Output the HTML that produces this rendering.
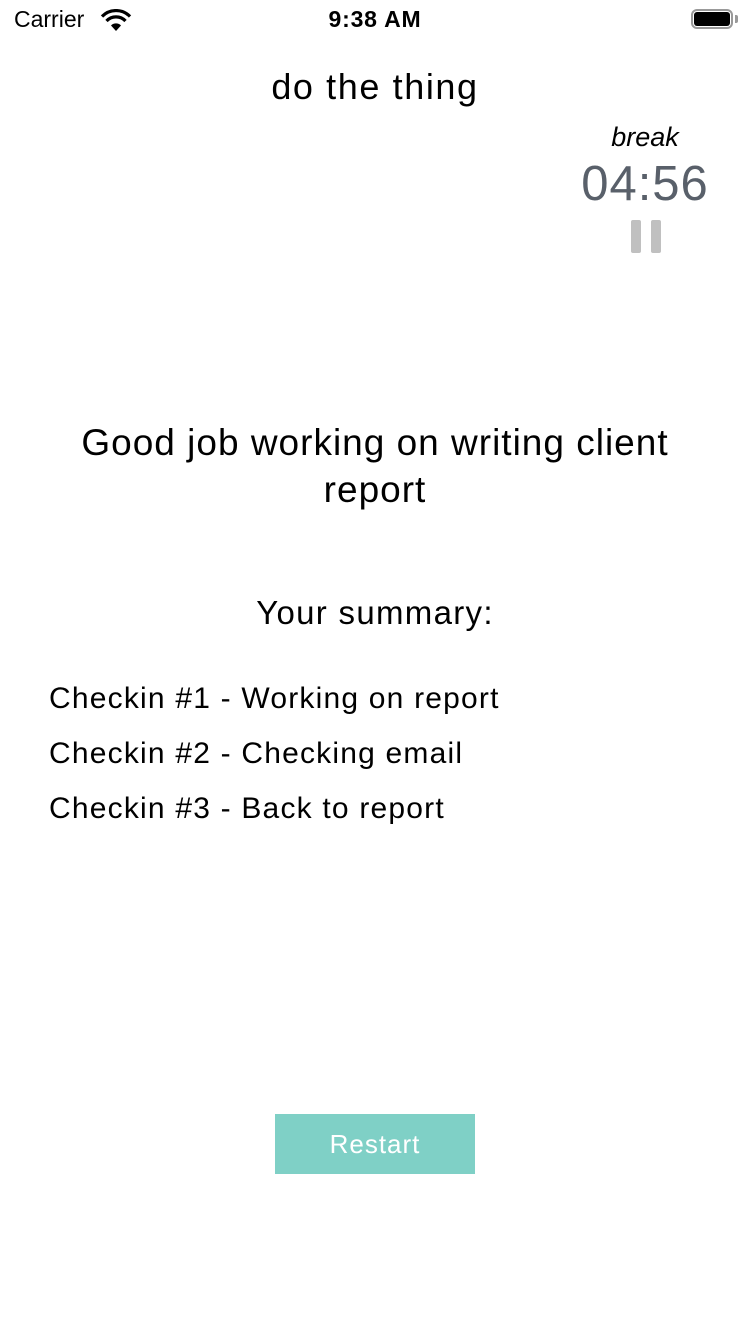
<!DOCTYPE html>
<html><head><meta charset="utf-8"><style>
body{margin:0;width:750px;height:1334px;background:#fff;font-family:"Liberation Sans",sans-serif;position:relative;overflow:hidden;color:#000}
.a{position:absolute;white-space:nowrap}
</style></head><body>
<div class="a" style="left:14px;top:6px;font-size:23px">Carrier</div>
<svg class="a" style="left:100px;top:9px" width="32" height="24" viewBox="0 0 32 24"><path d="M16 22 L11 16.5 A7 7 0 0 1 21 16.5Z" fill="#000"/><path d="M6.5 12 A13 13 0 0 1 25.5 12" stroke="#000" stroke-width="3.2" fill="none"/><path d="M2 7.5 A19.5 19.5 0 0 1 30 7.5" stroke="#000" stroke-width="3.2" fill="none"/></svg>
<div class="a" style="left:0;width:750px;text-align:center;top:6px;font-size:23px;font-weight:bold;letter-spacing:0.8px">9:38 AM</div>
<div class="a" style="left:691px;top:9px;width:42px;height:20px;border:2px solid #999;border-radius:6px;box-sizing:border-box"></div>
<div class="a" style="left:694px;top:12px;width:36px;height:14px;background:#000;border-radius:3px"></div>
<div class="a" style="left:735px;top:15px;width:3px;height:8px;background:#999;border-radius:0 2px 2px 0"></div>
<div class="a" style="left:0;width:750px;text-align:center;top:66px;font-size:36px;letter-spacing:1.6px">do the thing</div>
<div class="a" style="left:570px;width:150px;text-align:center;top:122px;font-size:27px;font-style:italic">break</div>
<div class="a" style="left:560px;width:170px;text-align:center;top:156px;font-size:49px;color:#59606a;letter-spacing:1px">04:56</div>
<div class="a" style="left:631px;top:220px;width:10px;height:33px;background:#c0c0c0;border-radius:2px"></div>
<div class="a" style="left:651px;top:220px;width:10px;height:33px;background:#c0c0c0;border-radius:2px"></div>
<div class="a" style="left:0;width:750px;text-align:center;top:419px;font-size:37px;line-height:47px;letter-spacing:1px;white-space:normal">Good job working on writing client<br>report</div>
<div class="a" style="left:0;width:750px;text-align:center;top:594px;font-size:33px;letter-spacing:1.3px">Your summary:</div>
<div class="a" style="left:49px;top:682px;font-size:30px;letter-spacing:1.2px">Checkin #1 - Working on report</div>
<div class="a" style="left:49px;top:737px;font-size:30px;letter-spacing:1.2px">Checkin #2 - Checking email</div>
<div class="a" style="left:49px;top:792px;font-size:30px;letter-spacing:1.2px">Checkin #3 - Back to report</div>
<div class="a" style="left:275px;top:1114px;width:200px;height:60px;background:#7fd0c6;color:#fff;font-size:26px;text-align:center;line-height:60px;letter-spacing:1px">Restart</div>
</body></html>
